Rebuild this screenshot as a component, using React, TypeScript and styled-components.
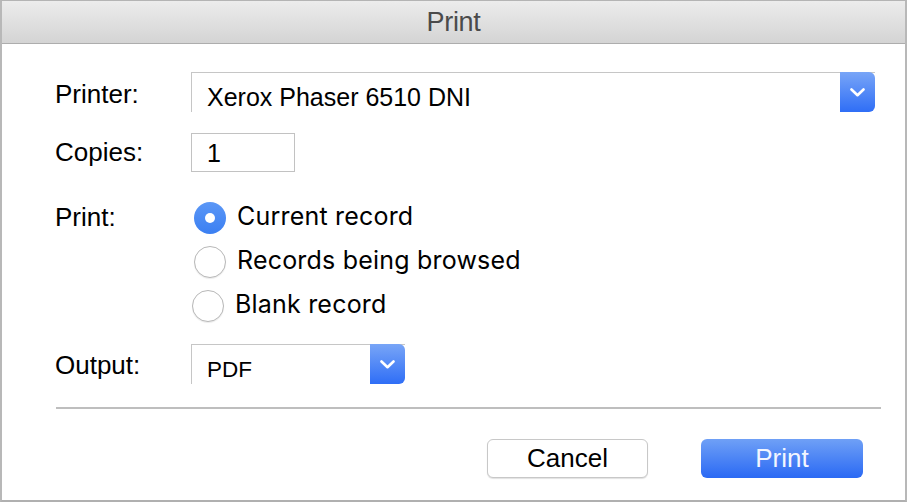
import React from "react";
import styled, { createGlobalStyle, css } from "styled-components";

const Global = createGlobalStyle`
  html, body { margin: 0; padding: 0; background: #ffffff; }
  body { font-family: "Liberation Sans", Arial, sans-serif; }
`;

const Window = styled.div`
  box-sizing: border-box;
  width: 907px;
  height: 502px;
  border-top: 1px solid #b4b4b4;
  border-left: 2px solid #b8b8b8;
  border-right: 2px solid #b8b8b8;
  border-bottom: 2px solid #b0b0b0;
  background: #ffffff;
  display: flex;
  flex-direction: column;
  color: #000;
`;

const TitleBar = styled.div`
  height: 42px;
  border-bottom: 1px solid #adadad;
  background: linear-gradient(#ececec, #d4d4d4);
  display: flex;
  align-items: center;
  justify-content: center;
  font-size: 27px;
  color: #4b4b4b;
  letter-spacing: -0.3px;
`;

const Body = styled.div`
  display: flex;
  flex-direction: column;
  padding: 28px 0 0 53px;
`;

const Row = styled.div<{ $mt?: number }>`
  display: flex;
  align-items: flex-start;
  margin-top: ${(p) => p.$mt ?? 0}px;
`;

const Label = styled.div<{ $offset: number }>`
  width: 136px;
  flex: none;
  font-size: 26px;
  line-height: 30px;
  margin-top: ${(p) => p.$offset}px;
`;

const Select = styled.div<{ $w: number }>`
  box-sizing: border-box;
  width: ${(p) => p.$w}px;
  height: 40px;
  display: flex;
  border-top: 1px solid #c6c6c6;
  border-left: 1px solid #c6c6c6;
`;

const SelectText = styled.div<{ $size: number; $pt: number }>`
  flex: 1;
  padding: ${(p) => p.$pt}px 0 0 15px;
  font-size: ${(p) => p.$size}px;
  line-height: 30px;
  white-space: nowrap;
`;

const SelectButton = styled.div`
  width: 35px;
  height: 40px;
  margin-top: -1px;
  flex: none;
  border-radius: 0 6px 6px 0;
  background: linear-gradient(#78a5f7, #2f6ef6);
  display: flex;
  align-items: center;
  justify-content: center;
`;

const Input = styled.div`
  box-sizing: border-box;
  width: 104px;
  height: 39px;
  border: 1px solid #c2c2c2;
  display: flex;
  align-items: center;
  padding-left: 15px;
  font-size: 25px;
  line-height: 30px;
`;

const RadioList = styled.div`
  display: flex;
  flex-direction: column;
  gap: 13px;
  margin-left: 3px;
`;

const RadioRow = styled.div<{ $shift?: number }>`
  display: flex;
  align-items: center;
  height: 31px;
  gap: 11px;
  margin-left: ${(p) => p.$shift ?? 0}px;
`;

const RadioText = styled.span`
  font-family: Inter, "Liberation Sans", sans-serif;
  font-size: 25px;
  line-height: 30px;
  letter-spacing: 0.2px;
  padding-bottom: 4px;
  white-space: nowrap;
`;

const RadioCircle = styled.div<{ $checked?: boolean }>`
  box-sizing: border-box;
  width: 32px;
  height: 32px;
  flex: none;
  border-radius: 50%;
  display: flex;
  align-items: center;
  justify-content: center;
  ${(p) =>
    p.$checked
      ? css`
          background: linear-gradient(#5b97f6, #3b7ff2);
          &::after {
            content: "";
            width: 10px;
            height: 10px;
            border-radius: 50%;
            background: #ffffff;
          }
        `
      : css`
          background: #ffffff;
          border: 1px solid #b8b8b8;
          box-shadow: 0 1px 1px rgba(0, 0, 0, 0.08);
        `}
`;

const Divider = styled.div`
  height: 2px;
  background: #bebebe;
  margin: 23px 24px 0 54px;
`;

const Buttons = styled.div`
  display: flex;
  justify-content: flex-end;
  gap: 53px;
  padding: 30px 42px 0 0;
`;

const Button = styled.div<{ $primary?: boolean; $w: number }>`
  box-sizing: border-box;
  width: ${(p) => p.$w}px;
  height: 39px;
  border-radius: 6px;
  display: flex;
  align-items: center;
  justify-content: center;
  font-size: 26px;
  ${(p) =>
    p.$primary
      ? css`
          background: linear-gradient(#6fa0f6, #2a69f4);
          color: #f2f6ff;
        `
      : css`
          background: #ffffff;
          border: 1px solid #c8c8c8;
          box-shadow: 0 1px 1px rgba(0, 0, 0, 0.12);
          color: #000;
        `}
`;

const Chevron = () => (
  <svg width="15" height="9" viewBox="0 0 15 9">
    <polyline
      points="1.5,1.5 7.5,7.2 13.5,1.5"
      fill="none"
      stroke="#ffffff"
      strokeWidth="2.6"
      strokeLinecap="round"
      strokeLinejoin="round"
    />
  </svg>
);

export default function App() {
  return (
    <>
      <Global />
      <Window>
        <TitleBar>Print</TitleBar>
        <Body>
          <Row>
            <Label $offset={7}>Printer:</Label>
            <Select $w={684}>
              <SelectText $size={25} $pt={9}>Xerox Phaser 6510 DNI</SelectText>
              <SelectButton>
                <Chevron />
              </SelectButton>
            </Select>
          </Row>
          <Row $mt={21}>
            <Label $offset={4}>Copies:</Label>
            <Input>1</Input>
          </Row>
          <Row $mt={30}>
            <Label $offset={0}>Print:</Label>
            <RadioList>
              <RadioRow>
                <RadioCircle $checked />
                <RadioText>Current record</RadioText>
              </RadioRow>
              <RadioRow>
                <RadioCircle />
                <RadioText>Records being browsed</RadioText>
              </RadioRow>
              <RadioRow $shift={-2}>
                <RadioCircle />
                <RadioText>Blank record</RadioText>
              </RadioRow>
            </RadioList>
          </Row>
          <Row $mt={23}>
            <Label $offset={6}>Output:</Label>
            <Select $w={214}>
              <SelectText $size={22.5} $pt={10}>PDF</SelectText>
              <SelectButton>
                <Chevron />
              </SelectButton>
            </Select>
          </Row>
        </Body>
        <Divider />
        <Buttons>
          <Button $w={161}>Cancel</Button>
          <Button $w={162} $primary>
            Print
          </Button>
        </Buttons>
      </Window>
    </>
  );
}
